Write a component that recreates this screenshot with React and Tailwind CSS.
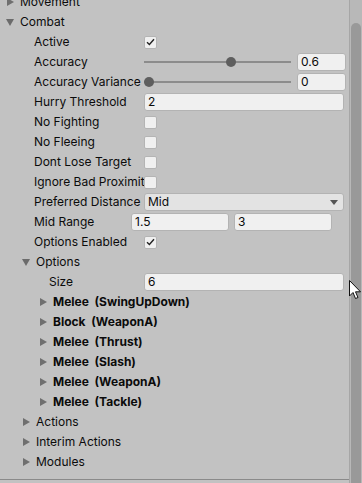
const font = { fontFamily: 'Inter, "Liberation Sans", sans-serif' }

function Tri({ open, className = '' }) {
  return open ? (
    <svg width="8" height="7" viewBox="0 0 8 7" className={className}>
      <path d="M0 0 H8 L4 7 Z" fill="#6b6b6b" />
    </svg>
  ) : (
    <svg width="7" height="8" viewBox="0 0 7 8" className={className}>
      <path d="M0 0 V8 L7 4 Z" fill="#6f6f6f" />
    </svg>
  )
}

function Check({ on }) {
  return (
    <div className="w-[13px] h-[13px] rounded-[2px] bg-[#f0f0f0] border border-[#b4b4b4] flex items-center justify-center">
      {on && (
        <svg width="9" height="8" viewBox="0 0 9 8">
          <path d="M1 4.2 L3.4 6.5 L8 1.2" fill="none" stroke="#222" strokeWidth="1.4" />
        </svg>
      )}
    </div>
  )
}

function Field({ value, className = '' }) {
  return (
    <div className={`h-[18px] bg-[#f0f0f0] border border-[#b3b3b3] rounded-[3px] pl-[3px] flex items-center text-[12px] text-[#0a0a0a] ${className}`}>
      {value}
    </div>
  )
}

function Row({ label, children, indent = 'pl-[34px]', labelW = 'w-[110px]' }) {
  return (
    <div className={`h-5 flex items-center ${indent}`}>
      <div className={`${labelW} shrink-0 overflow-hidden whitespace-nowrap`}>{label}</div>
      {children}
    </div>
  )
}

function Slider({ pos, value }) {
  return (
    <>
      <div className="relative w-[147px] h-5 flex items-center">
        <div className="h-[2px] w-full bg-[#8c8c8c]" />
        <div className="absolute top-[5px] w-[10px] h-[10px] rounded-full bg-[#5e5e5e]" style={{ left: pos }} />
      </div>
      <Field value={value} className="ml-[6px] w-[49px]" />
    </>
  )
}

function Foldout({ label, open, indent, bold }) {
  return (
    <div className={`h-5 flex items-center ${indent}`}>
      <Tri open={open} className="mr-[6px]" />
      <span className={bold ? 'font-bold whitespace-pre' : ''}>{label}</span>
    </div>
  )
}

const options = [
  'Melee  (SwingUpDown)',
  'Block  (WeaponA)',
  'Melee  (Thrust)',
  'Melee  (Slash)',
  'Melee  (WeaponA)',
  'Melee  (Tackle)',
]

export default function App() {
  return (
    <div className="relative w-[362px] h-[483px] overflow-hidden bg-[#c2c2c2] flex text-[12px] text-[#0b0b0b]" style={font}>
      <div className="flex-1 flex flex-col">
        <div className="-mt-[8px] flex flex-col border-b border-[#8a8a8a] pb-[7px]">
          <Foldout label="Movement" indent="pl-[7px]" />
          <Foldout label="Combat" open indent="pl-[6px]" />
          <Row label="Active"><Check on /></Row>
          <Row label="Accuracy"><Slider pos={82} value="0.6" /></Row>
          <Row label="Accuracy Variance"><Slider pos={0} value="0" /></Row>
          <Row label="Hurry Threshold"><Field value="2" className="w-[200px]" /></Row>
          <Row label="No Fighting"><Check /></Row>
          <Row label="No Fleeing"><Check /></Row>
          <Row label="Dont Lose Target"><Check /></Row>
          <Row label="Ignore Bad Proximity"><Check /></Row>
          <Row label="Preferred Distance">
            <div className="w-[200px] h-[18px] bg-[#e3e3e3] border border-[#b3b3b3] rounded-[3px] pl-[3px] pr-[5px] flex items-center justify-between">
              <span>Mid</span>
              <svg width="8" height="5" viewBox="0 0 8 5"><path d="M0 0 H8 L4 5 Z" fill="#555" /></svg>
            </div>
          </Row>
          <Row label="Mid Range" labelW="w-[97px]">
            <Field value="1.5" className="w-[98px]" />
            <Field value="3" className="ml-[5px] w-[98px]" />
          </Row>
          <Row label="Options Enabled"><Check on /></Row>
          <Foldout label="Options" open indent="pl-[22px]" />
          <Row label="Size" indent="pl-[49px]" labelW="w-[95px]"><Field value="6" className="w-[200px]" /></Row>
          {options.map((o) => (
            <Foldout key={o} label={o} bold indent="pl-[40px]" />
          ))}
          <Foldout label="Actions" indent="pl-[23px]" />
          <Foldout label="Interim Actions" indent="pl-[23px]" />
          <Foldout label="Modules" indent="pl-[23px]" />
        </div>
      </div>
      <div className="w-[13px] h-full bg-[#b8b8b8] border-l border-[#a6a6a6] flex flex-col pt-[23px] pl-[1px] pr-[1px]">
        <div className="flex-1 bg-[#999999] rounded-t-full" />
      </div>
      <svg className="absolute left-[349px] top-[280px]" width="13" height="20" viewBox="0 0 13 20">
        <path d="M0.5 0.5 V16 L4 12.5 L6.5 18.5 L9 17.5 L6.5 11.8 H11.5 Z" fill="#fff" stroke="#111" strokeWidth="1" strokeLinejoin="round" />
      </svg>
    </div>
  )
}
